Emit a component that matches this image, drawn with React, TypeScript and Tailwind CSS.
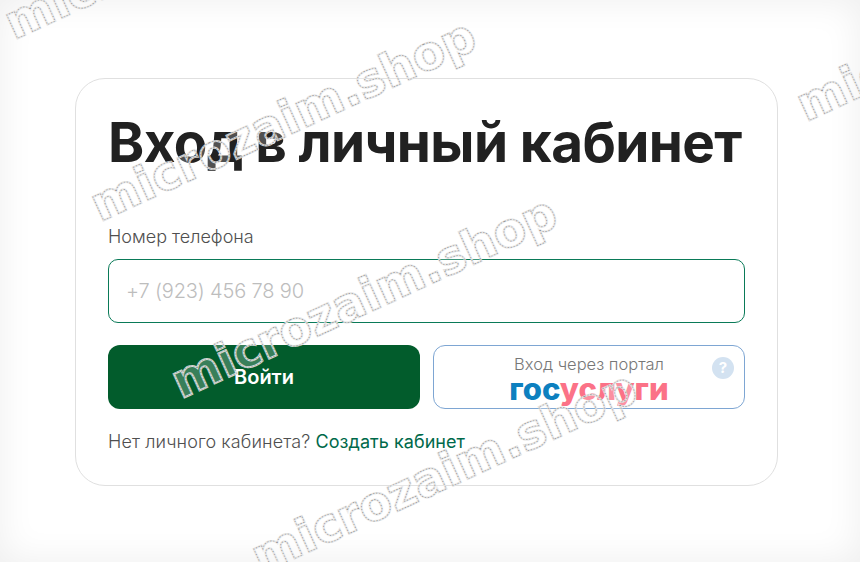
const FONT = "font-['Inter','Noto_Sans',sans-serif]";

function Watermark({ x, y }: { x: number; y: number }) {
  const shared = {
    x,
    y,
    transform: `rotate(-24.7 ${x} ${y})`,
    fontFamily: "'DejaVu Sans', sans-serif",
    fontSize: 47,
    fontWeight: 700,
  };
  return (
    <g>
      <text {...shared} fill="none" stroke="#e2e2e2" strokeWidth="2" opacity="0.9" aria-hidden="true">
        microzaim.shop
      </text>
      <text {...shared} fill="rgba(255,255,255,0.22)" stroke="#8a8a8a" strokeWidth="0.7" strokeDasharray="1.2 1.8">
        microzaim.shop
      </text>
    </g>
  );
}

export default function App() {
  return (
    <div className={`relative h-[562px] w-[860px] overflow-hidden bg-white pl-[75px] pt-[78px] shadow-[inset_0_0_36px_rgba(0,0,0,0.07)] ${FONT}`}>
      {/* Card */}
      <div className="h-[408px] w-[703px] rounded-[30px] border border-[#e0e0e0] bg-white px-8 pt-[30px]">
        <h1 className="whitespace-nowrap text-[54.8px] font-bold leading-[66px] tracking-[-0.6px] text-[#212121]">
          Вход в личный кабинет
        </h1>

        <label className="mt-[49px] block text-[18px] font-light leading-[26px] text-[#4f4f4f]">Номер телефона</label>
        <div className="mt-[9px] flex h-[64px] items-center rounded-[10px] border-[1.5px] border-[#0a7a58] px-[17px] text-[20px] font-light tracking-[-0.15px] text-[#bdbdbd]">
          +7 (923) 456 78 90
        </div>

        <div className="mt-[22px] flex gap-[13px]">
          <button className="h-[64px] w-[312px] rounded-[12px] bg-[#025c2c] text-[20px] font-semibold text-white">
            Войти
          </button>
          <div className="relative flex h-[64px] w-[312px] flex-col items-center rounded-[12px] border border-[#7ea6d3] bg-white pt-[8px]">
            <span className="text-[16.5px] font-light leading-[20px] text-[#777777]">Вход через портал</span>
            <span className="text-[31px] font-extrabold leading-[29px]">
              <span className="text-[#0d80bf]">гос</span>
              <span className="text-[#fb7287]">услуги</span>
            </span>
            <span className="absolute right-[10px] top-[11px] flex h-[22px] w-[22px] items-center justify-center rounded-full bg-[#d3e2f1] text-[15px] font-bold text-white">
              ?
            </span>
          </div>
        </div>

        <p className="mt-[20px] text-[18px] font-light leading-[26px] tracking-[0.1px] text-[#4f4f4f]">
          Нет личного кабинета? <a className="font-normal tracking-[0.05px] text-[#00694a]">Создать кабинет</a>
        </p>
      </div>

      {/* Watermarks over the page */}
      <svg className="pointer-events-none absolute left-0 top-0" width="860" height="562">
        <Watermark x={14} y={40} />
        <Watermark x={100} y={222} />
        <Watermark x={181} y={399} />
        <Watermark x={261} y={574} />
        <Watermark x={806} y={122} />
      </svg>
    </div>
  );
}
